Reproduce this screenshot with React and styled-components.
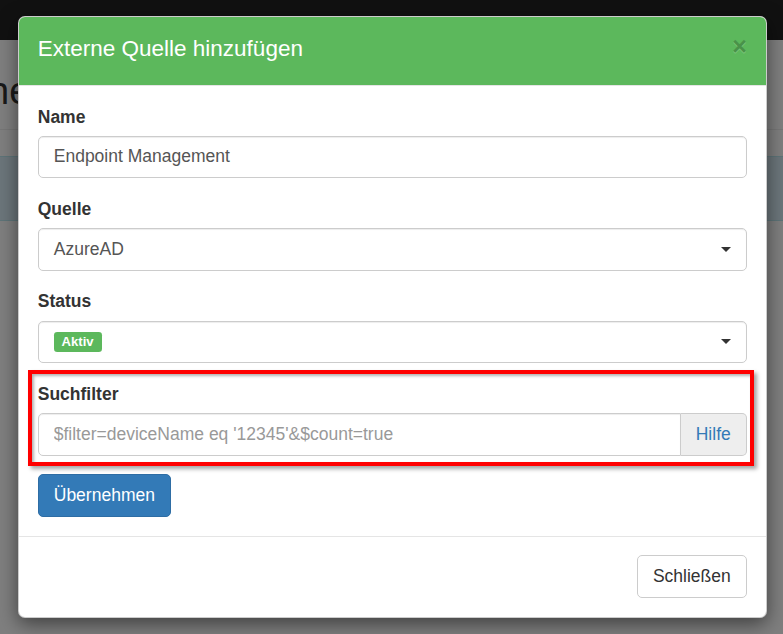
import React from "react";
import styled, { createGlobalStyle } from "styled-components";

const Global = createGlobalStyle`
  *, *::before, *::after { box-sizing: border-box; }
  html, body { margin: 0; padding: 0; }
  body {
    background: #fff;
    font-family: "Liberation Sans", Arial, Helvetica, sans-serif;
    font-size: 17.5px;
    line-height: 1.42857;
    color: #333;
    overflow: hidden;
  }
`;

const Page = styled.div`
  width: 783px;
  height: 634px;
  position: relative;
  overflow: hidden;
`;

const Navbar = styled.div`
  height: 40px;
  background: #222;
`;

const PageHeader = styled.div`
  padding: 31px 0 16px;
  border-bottom: 1px solid #eee;
  margin-bottom: 26px;
`;

const PageTitle = styled.h1`
  margin: 0 0 0 -12px;
  font-size: 38px;
  font-weight: 500;
  line-height: 1.1;
  color: #333;
  white-space: nowrap;
`;

const Alert = styled.div`
  height: 65px;
  background: #d9edf7;
  border-top: 1px solid #bce8f1;
  border-bottom: 1px solid #bce8f1;
`;

const Backdrop = styled.div`
  position: absolute;
  inset: 0;
  background: rgba(0, 0, 0, 0.5);
  display: flex;
  flex-direction: column;
  align-items: flex-start;
  padding: 16px 0 0 18px;
`;

const Dialog = styled.div`
  width: 748.5px;
  background: #fff;
  border: 1px solid rgba(0, 0, 0, 0.2);
  border-radius: 7px;
  box-shadow: 0 6px 19px rgba(0, 0, 0, 0.5);
  overflow: hidden;
`;

const Header = styled.div`
  background: #5cb85c;
  padding: 16px 18.75px 20px;
  border-bottom: 1px solid #e5e5e5;
  display: flex;
  justify-content: space-between;
  align-items: flex-start;
`;

const Title = styled.h4`
  margin: 0;
  font-size: 22.5px;
  font-weight: 500;
  line-height: 32px;
  color: #fff;
`;

const Close = styled.button`
  border: 0;
  background: transparent;
  padding: 0;
  margin-top: 1px;
  font-family: "Liberation Sans", Arial, sans-serif;
  font-size: 25px;
  font-weight: 700;
  line-height: 1;
  color: #000;
  opacity: 0.2;
  text-shadow: 0 1px 0 #fff;
  cursor: pointer;
`;

const Body = styled.div`
  padding: 18.5px 18.75px 18.75px;
`;

const FormGroup = styled.div`
  margin-bottom: 18.75px;
  position: relative;
  ${(p) =>
    p.$highlight &&
    `
    &::after {
      content: "";
      position: absolute;
      top: -11.5px;
      left: -10px;
      right: -7px;
      bottom: -10px;
      border: 4px solid #ff0000;
      box-shadow: 3px 3px 4px rgba(0,0,0,0.35), inset 2px 2px 3px rgba(0,0,0,0.3);
      pointer-events: none;
    }
  `}
`;

const Label = styled.label`
  display: block;
  font-weight: 700;
  margin-bottom: 6.25px;
  color: #333;
`;

const Input = styled.input`
  display: block;
  width: 100%;
  height: 42.5px;
  padding: 7.5px 15px;
  font-family: inherit;
  font-size: 17.5px;
  line-height: 1.42857;
  color: #555;
  background: #fff;
  border: 1px solid #ccc;
  border-radius: ${(p) => (p.$grouped ? "5px 0 0 5px" : "5px")};
  box-shadow: inset 0 1px 1px rgba(0, 0, 0, 0.075);
  outline: none;
  &::placeholder { color: #999; opacity: 1; }
`;

const Select = styled.div`
  height: 42.5px;
  padding: 0 15px;
  display: flex;
  align-items: center;
  justify-content: space-between;
  color: #555;
  background: #fff;
  border: 1px solid #ccc;
  border-radius: 5px;
  box-shadow: inset 0 1px 1px rgba(0, 0, 0, 0.075);
`;

const Caret = styled.span`
  width: 0;
  height: 0;
  border-left: 5px solid transparent;
  border-right: 5px solid transparent;
  border-top: 5px solid #333;
`;

const Badge = styled.span`
  display: inline-block;
  background: #5cb85c;
  color: #fff;
  font-size: 13.1px;
  font-weight: 700;
  line-height: 1;
  padding: 0.2em 0.6em 0.3em;
  border-radius: 0.25em;
`;

const InputGroup = styled.div`
  display: flex;
`;

const Addon = styled.button`
  height: 42.5px;
  padding: 7.5px 15px;
  font-family: inherit;
  font-size: 17.5px;
  line-height: 1.42857;
  color: #337ab7;
  background: #eee;
  border: 1px solid #ccc;
  border-left: 0;
  border-radius: 0 5px 5px 0;
  cursor: pointer;
`;

const Button = styled.button`
  display: inline-block;
  height: 42.5px;
  padding: 7.5px 15px;
  font-family: inherit;
  font-size: 17.5px;
  line-height: 1.42857;
  border-radius: 5px;
  cursor: pointer;
  color: ${(p) => (p.$primary ? "#fff" : "#333")};
  background: ${(p) => (p.$primary ? "#337ab7" : "#fff")};
  border: 1px solid ${(p) => (p.$primary ? "#2e6da4" : "#ccc")};
`;

const Footer = styled.div`
  padding: 18.75px;
  border-top: 1px solid #e5e5e5;
  display: flex;
  justify-content: flex-end;
`;

export default function App() {
  return (
    <>
      <Global />
      <Page>
        <Navbar />
        <PageHeader>
          <PageTitle>ne</PageTitle>
        </PageHeader>
        <Alert />
        <Backdrop>
          <Dialog>
            <Header>
              <Title>Externe Quelle hinzufügen</Title>
              <Close aria-label="Close">×</Close>
            </Header>
            <Body>
              <FormGroup>
                <Label>Name</Label>
                <Input defaultValue="Endpoint Management" />
              </FormGroup>
              <FormGroup>
                <Label>Quelle</Label>
                <Select>
                  <span>AzureAD</span>
                  <Caret />
                </Select>
              </FormGroup>
              <FormGroup>
                <Label>Status</Label>
                <Select>
                  <Badge>Aktiv</Badge>
                  <Caret />
                </Select>
              </FormGroup>
              <FormGroup $highlight>
                <Label>Suchfilter</Label>
                <InputGroup>
                  <Input $grouped placeholder="$filter=deviceName eq '12345'&$count=true" />
                  <Addon>Hilfe</Addon>
                </InputGroup>
              </FormGroup>
              <Button $primary>Übernehmen</Button>
            </Body>
            <Footer>
              <Button>Schließen</Button>
            </Footer>
          </Dialog>
        </Backdrop>
      </Page>
    </>
  );
}
